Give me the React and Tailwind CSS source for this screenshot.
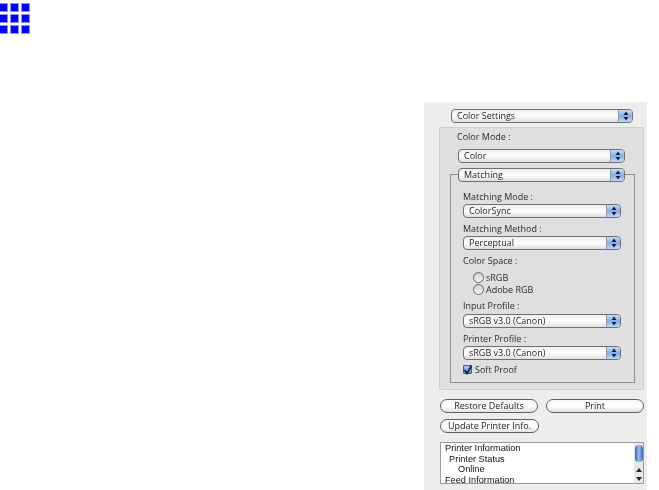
const font = "[font-family:'Open_Sans',sans-serif]";

function Arrows() {
  return (
    <svg width="6" height="10" viewBox="0 0 6 10" className="block">
      <path d="M3 0.5 L5.5 4 L0.5 4 Z" fill="#10233f" />
      <path d="M3 9.5 L5.5 6 L0.5 6 Z" fill="#10233f" />
    </svg>
  );
}

function Select({ label, className = "" }) {
  return (
    <div className={`h-[14px] flex rounded-[4px] border border-[#6e6f73] overflow-hidden bg-gradient-to-b from-[#ececec] via-[#ffffff] to-[#dedede] ${className}`}>
      <div className="flex-1 pl-[5px] text-[9px] leading-[12px] text-[#222222] whitespace-nowrap">{label}</div>
      <div className="w-[14px] flex items-center justify-center border-l border-[#8b9ab5] bg-gradient-to-b from-[#c9dcf6] via-[#86aee6] to-[#c3d8f5]">
        <Arrows />
      </div>
    </div>
  );
}

function Label({ children, className = "" }) {
  return <div className={`text-[9px] leading-[11px] text-[#2b2b2b] whitespace-nowrap ${className}`}>{children}</div>;
}

function Radio({ label, className = "" }) {
  return (
    <div className={`flex items-center gap-[2px] ${className}`}>
      <div className="w-[11px] h-[11px] rounded-full border border-[#66676a] bg-gradient-to-b from-[#cfcfcf] to-[#f6f6f6]" />
      <span className="text-[9px] leading-[11px] text-[#2b2b2b]">{label}</span>
    </div>
  );
}

function Pill({ label, className = "" }) {
  return (
    <div className={`h-[14px] rounded-full border border-[#5f5f5f] bg-gradient-to-b from-[#f6f6f6] via-[#ffffff] to-[#e2e2e2] text-center text-[9px] leading-[12px] text-[#222222] whitespace-nowrap ${className}`}>
      {label}
    </div>
  );
}

export default function App() {
  return (
    <div className={`w-[659px] h-[490px] bg-white overflow-hidden flex ${font}`}>
      <div className="w-[424px] shrink-0 pt-[3px]">
        <div className="-ml-[1px] grid grid-cols-[repeat(3,9px)] grid-rows-[repeat(3,9px)] gap-[2px]">
          {Array.from({ length: 9 }).map((_, i) => (
            <div key={i} className="bg-[#0000ff] border border-[#8f8fff]" />
          ))}
        </div>
      </div>

      <div className="mt-[102px] w-[235px] h-[388px]">
        <div className="w-[223px] h-[388px] bg-[#ededed] pt-[7px] blur-[0.35px]">
          <Select label="Color Settings" className="ml-[27px] w-[182px]" />

          <div className="ml-[15px] mt-[4px] w-[205px] h-[263px] bg-[#dfdfdf] border border-[#cdcdcd] rounded-[2px] pt-[3px]">
            <Label className="ml-[17px]">Color Mode :</Label>
            <Select label="Color" className="ml-[18px] mt-[7px] w-[167px]" />

            <div className="relative ml-[10px] mt-[11px] w-[185px] h-[209px] border border-[#8f8f8f]">
              <Select label="Matching" className="absolute -top-[7px] left-[7px] w-[167px]" />
              <div className="pl-[12px] pt-[16px]">
                <Label>Matching Mode :</Label>
                <Select label="ColorSync" className="mt-[2px] w-[158px]" />
                <Label className="mt-[5px]">Matching Method :</Label>
                <Select label="Perceptual" className="mt-[2px] w-[158px]" />
                <Label className="mt-[5px]">Color Space :</Label>
                <Radio label="sRGB" className="ml-[10px] mt-[6px]" />
                <Radio label="Adobe RGB" className="ml-[10px] mt-[1px]" />
                <Label className="mt-[5px]">Input Profile :</Label>
                <Select label="sRGB v3.0 (Canon)" className="mt-[3px] w-[158px]" />
                <Label className="mt-[5px]">Printer Profile :</Label>
                <Select label="sRGB v3.0 (Canon)" className="mt-[2px] w-[158px]" />
                <div className="mt-[4px] flex items-center gap-[3px]">
                  <div className="w-[9px] h-[9px] rounded-[1px] border border-[#3f5f95] bg-gradient-to-b from-[#a9c6ee] to-[#5e8fd6] flex items-center justify-center">
                    <svg width="10" height="10" viewBox="0 0 10 10" className="shrink-0">
                      <path d="M1.5 5 L4 8.5 L8.5 0.5" fill="none" stroke="#10233f" strokeWidth="1.7" />
                    </svg>
                  </div>
                  <span className="text-[9px] leading-[11px] text-[#2b2b2b]">Soft Proof</span>
                </div>
              </div>
            </div>
          </div>

          <div className="ml-[16px] mt-[9px] flex gap-[8px]">
            <Pill label="Restore Defaults" className="w-[98px]" />
            <Pill label="Print" className="w-[98px]" />
          </div>
          <Pill label="Update Printer Info." className="ml-[16px] mt-[6px] w-[99px]" />

          <div className="ml-[16px] mt-[9px] w-[204px] h-[42px] bg-white border border-[#9a9a9a] flex overflow-hidden">
            <div className="flex-1 pl-[4px] font-['Liberation_Sans'] text-[9.2px] leading-[10.67px] text-[#111111] whitespace-nowrap">
              <div>Printer Information</div>
              <div className="pl-[4px]">Printer Status</div>
              <div className="pl-[13px]">Online</div>
              <div>Feed Information</div>
            </div>
            <div className="w-[9px] flex flex-col bg-[#e8e8e8] items-center">
              <div className="w-[8px] h-[17px] mt-[2px] rounded-full bg-gradient-to-r from-[#2f62b8] via-[#9cc0ee] to-[#2f62b8]" />
              <div className="flex-1" />
              <div className="w-0 h-0 mb-[5px] border-x-[3px] border-x-transparent border-b-[4px] border-b-[#222222]" />
              <div className="w-0 h-0 mb-[2px] border-x-[3px] border-x-transparent border-t-[4px] border-t-[#222222]" />
            </div>
          </div>
        </div>
      </div>
    </div>
  );
}
